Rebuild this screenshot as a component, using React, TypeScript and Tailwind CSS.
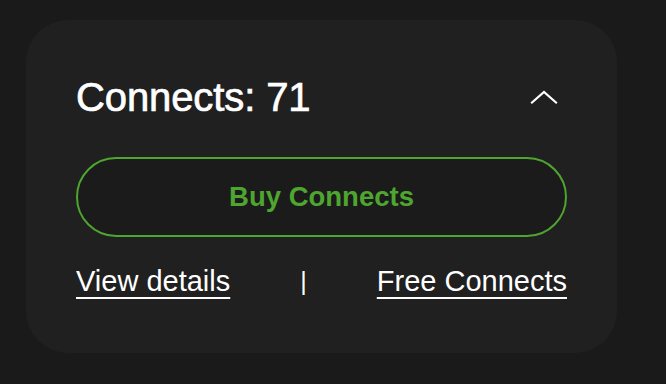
import React from "react";

function ChevronUp() {
	return (
		<svg width="28" height="16" viewBox="0 0 28 16" fill="none" className="mr-[9px]">
			<path d="M2 13.5 L14 3 L26 13.5" stroke="#ffffff" strokeWidth="2.2" strokeLinecap="square" />
		</svg>
	);
}

export default function App() {
	return (
		<div
			className="w-[666px] h-[384px] bg-[#1a1a1a] pl-[26px] pt-[20px]"
			style={{ fontFamily: '"Liberation Sans", Arial, sans-serif' }}
		>
			<div className="w-[591px] h-[333px] rounded-[42px] bg-[#202020] px-[50px] pt-[57px] flex flex-col">
				{/* Header */}
				<div className="flex items-center justify-between h-[40px]">
					<h2 className="text-[40px] leading-none text-white font-normal tracking-[-0.1px] [-webkit-text-stroke:0.7px_white]">
						Connects: 71
					</h2>
					<ChevronUp />
				</div>

				{/* Buy button */}
				<button className="mt-[40px] h-[80px] w-full rounded-full border-2 border-[#4ea52f] bg-[#1b1b1b] text-[#4ea52f] text-[27.5px] font-bold leading-none">
					Buy Connects
				</button>

				{/* Links */}
				<div className="mt-[30px] flex items-center justify-between text-[29px] leading-none text-white">
					<a className="underline decoration-2 underline-offset-[6px]">View details</a>
					<span className="text-[25px] font-light">|</span>
					<a className="underline decoration-2 underline-offset-[6px]">Free Connects</a>
				</div>
			</div>
		</div>
	);
}
